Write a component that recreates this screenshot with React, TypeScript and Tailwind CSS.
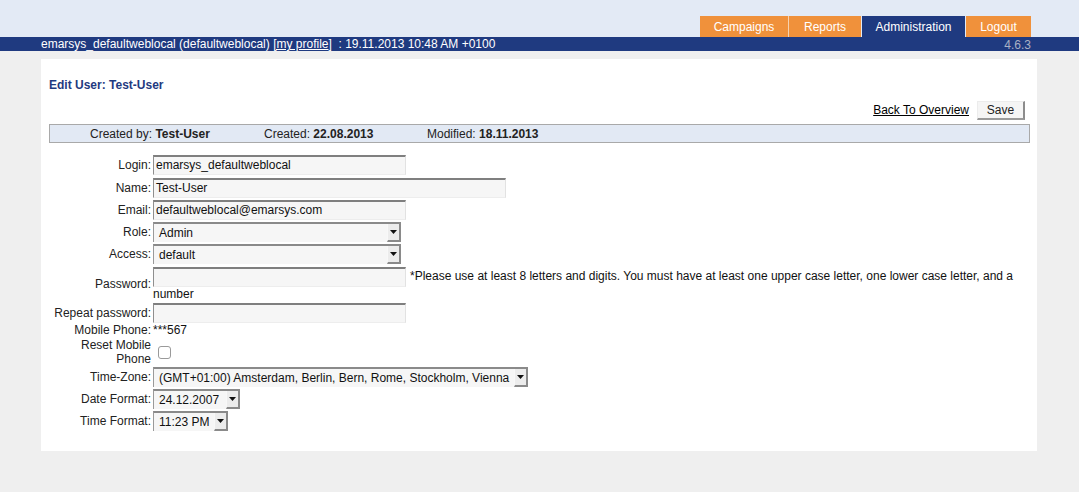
import React from "react";

function Arrow() {
  return (
    <svg width="7" height="4" viewBox="0 0 7 4">
      <path d="M0 0 L7 0 L3.5 4 Z" fill="#111" />
    </svg>
  );
}

function Select({ value, w }: { value: string; w: string }) {
  return (
    <div
      className={`${w} h-[20px] flex items-stretch bg-[#f6f6f6] border-t-2 border-l border-t-[#8a8a8a] border-l-[#9a9a9a]`}
    >
      <div className="flex-1 flex items-center pl-[5px] whitespace-nowrap text-[#111]">
        {value}
      </div>
      <div className="w-[14px] flex items-center justify-center bg-[#ececec] border-r-2 border-b-2 border-r-[#8a8a8a] border-b-[#8a8a8a] border-l border-l-[#f8f8f8]">
        <Arrow />
      </div>
    </div>
  );
}

function Input({ value, w }: { value?: string; w: string }) {
  return (
    <div
      className={`${w} h-[20px] inline-flex items-center align-middle pl-[2px] bg-[#f6f6f6] border-t-2 border-l border-t-[#7f7f7f] border-l-[#8f8f8f] border-r border-b border-r-[#e2e2e2] border-b-[#ededed] text-[#111] whitespace-nowrap`}
    >
      {value}
    </div>
  );
}

function Row({
  label,
  h,
  children,
}: {
  label: React.ReactNode;
  h: string;
  children: React.ReactNode;
}) {
  return (
    <div className={`flex items-center ${h}`}>
      <div className="w-[104px] shrink-0 text-right pr-[2px] text-[#222]">{label}</div>
      <div className="flex items-center">{children}</div>
    </div>
  );
}

export default function App() {
  return (
    <div className="min-h-[492px] bg-[#efefef] font-['Liberation_Sans',Arial,sans-serif] text-[12px] leading-[14px]">
      {/* header */}
      <div className="h-[37px] bg-[#e3eaf5] flex items-end justify-end pr-[48px]">
        <div className="flex h-[21px] text-white">
          <div className="w-[88px] bg-[#f0913b] flex items-center justify-center">Campaigns</div>
          <div className="w-[1px] bg-[#f6d2b0]" />
          <div className="w-[72px] bg-[#f0913b] flex items-center justify-center">Reports</div>
          <div className="w-[1px] bg-[#e3eaf5]" />
          <div className="w-[103px] bg-[#1f3a80] flex items-center justify-center">Administration</div>
          <div className="w-[1px] bg-[#e3eaf5]" />
          <div className="w-[65px] bg-[#f0913b] flex items-center justify-center">Logout</div>
        </div>
      </div>
      <div className="h-[14px] bg-[#1f3a80] flex items-center justify-between pl-[41px] pr-[48px] text-white leading-[14px]">
        <div className="whitespace-nowrap">
          emarsys_defaultweblocal (defaultweblocal) <span className="underline">[my profile</span>]&nbsp; : 19.11.2013 10:48 AM +0100
        </div>
        <div className="text-[#a9b1c4] translate-y-[1px]">4.6.3</div>
      </div>

      {/* card */}
      <div className="ml-[41px] mt-[8px] w-[996px] h-[392px] bg-white pl-[8px] pr-[7px]">
        <div className="pt-[19px] font-bold text-[#1f3a80]">Edit User: Test-User</div>

        <div className="mt-[8px] h-[20px] flex items-center justify-end pr-[5px]">
          <a className="underline text-black">Back To Overview</a>
          <div className="ml-[8px] w-[48px] h-[19px] flex items-center justify-center bg-[#f5f5f5] border-t border-l border-[#ececec] border-r-2 border-b-2 border-r-[#8c8c8c] border-b-[#9a9a9a] text-[#222]">
            Save
          </div>
        </div>

        <div className="mt-[4px] h-[19px] bg-[#e2e9f4] border border-[#a9a9a9] flex items-center pl-[40px] text-[#222]">
          <div className="w-[174px]">
            Created by:<span className="font-bold"> Test-User</span>
          </div>
          <div className="w-[163px]">
            Created: <span className="font-bold">22.08.2013</span>
          </div>
          <div>
            Modified: <span className="font-bold">18.11.2013</span>
          </div>
        </div>

        {/* form */}
        <div className="mt-[10px] flex flex-col">
          <Row label="Login:" h="h-[23px]">
            <Input w="w-[253px]" value="emarsys_defaultweblocal" />
          </Row>
          <Row label="Name:" h="h-[23px]">
            <Input w="w-[353px]" value="Test-User" />
          </Row>
          <Row label="Email:" h="h-[21px]">
            <Input w="w-[253px]" value="defaultweblocal@emarsys.com" />
          </Row>
          <Row label="Role:" h="h-[23px]">
            <Select w="w-[248px]" value="Admin" />
          </Row>
          <Row label="Access:" h="h-[22px]">
            <Select w="w-[248px]" value="default" />
          </Row>
          <Row label="Password:" h="h-[37px]">
            <div className="w-[877px] text-[#111]">
              <Input w="w-[253px]" />
              <span className="ml-[4px]">
                *Please use at least 8 letters and digits. You must have at least one upper case letter, one lower case letter, and a
              </span>
              <br />
              number
            </div>
          </Row>
          <Row label="Repeat password:" h="h-[21px]">
            <Input w="w-[253px]" />
          </Row>
          <Row label="Mobile Phone:" h="h-[14px]">
            <span className="text-[#111]">***567</span>
          </Row>
          <Row label="Reset Mobile Phone" h="h-[29px]">
            <div className="ml-[5px] mt-[2px] w-[13px] h-[13px] rounded-[3px] border border-[#9a9a9a] bg-white" />
          </Row>
          <Row label="Time-Zone:" h="h-[22px]">
            <Select w="w-[375px]" value="(GMT+01:00) Amsterdam, Berlin, Bern, Rome, Stockholm, Vienna" />
          </Row>
          <Row label="Date Format:" h="h-[22px]">
            <Select w="w-[87px]" value="24.12.2007" />
          </Row>
          <Row label="Time Format:" h="h-[22px]">
            <Select w="w-[75px]" value="11:23 PM" />
          </Row>
        </div>
      </div>
    </div>
  );
}
